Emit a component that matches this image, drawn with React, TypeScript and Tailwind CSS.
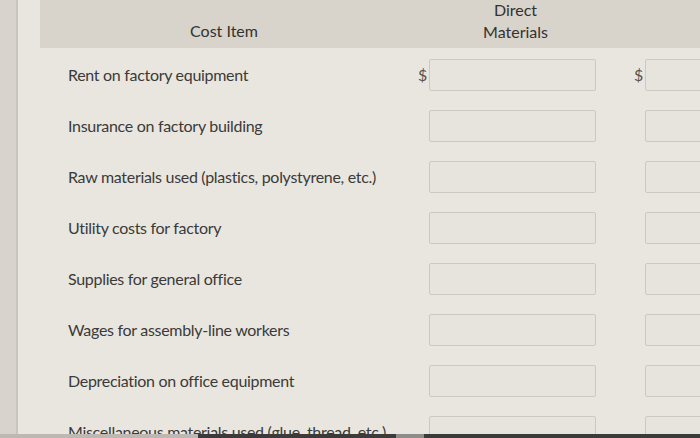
const items = [
  "Rent on factory equipment",
  "Insurance on factory building",
  "Raw materials used (plastics, polystyrene, etc.)",
  "Utility costs for factory",
  "Supplies for general office",
  "Wages for assembly-line workers",
  "Depreciation on office equipment",
  "Miscellaneous materials used (glue, thread, etc.)",
];

function Row({ label, first }: { label: string; first: boolean }) {
  return (
    <div className="flex h-[51px] items-center">
      <div className="w-[378px] pl-[28px] text-[16px] tracking-[-0.3px] text-[#3b3a38]">{label}</div>
      <div className="w-[11px] text-[16px] text-[#555350]">{first ? "$" : ""}</div>
      <div className="h-[32px] w-[167px] rounded-[2px] border border-[#cdc8c0] bg-[#e7e3dd]" />
      <div className="ml-[38px] w-[11px] text-[16px] text-[#555350]">{first ? "$" : ""}</div>
      <div className="h-[32px] w-[80px] rounded-[2px] border border-[#cdc8c0] bg-[#e7e3dd]" />
    </div>
  );
}

export default function App() {
  return (
    <div
      className="relative flex h-[438px] w-[700px] overflow-hidden bg-[#e9e6e0]"
      style={{ fontFamily: "Lato, 'Open Sans', sans-serif" }}
    >
      <div className="w-[18px] shrink-0 border-r-2 border-[#c9c4bc] bg-[#d8d4cd]" />
      <div className="flex flex-1 flex-col pl-[22px]">
        <div className="flex h-[48px] shrink-0 items-end bg-[#d8d3cb] pb-[5px]">
          <div className="w-[368px] text-center text-[16px] text-[#33322f]">Cost Item</div>
          <div className="ml-[12px] w-[191px] text-center text-[16px] leading-[22px] text-[#33322f]">
            Direct
            <br />
            Materials
          </div>
        </div>
        <div className="mt-[1px] flex flex-col">
          {items.map((label, i) => (
            <Row key={label} label={label} first={i === 0} />
          ))}
        </div>
      </div>
      <div className="absolute bottom-0 left-0 flex h-[4px] w-full">
        <div className="w-[198px] bg-[#bdb8b1]" />
        <div className="w-[198px] bg-[#3b3b3b]" />
        <div className="w-[28px] bg-[#8f8d8a]" />
        <div className="flex-1 bg-[#3b3b3b]" />
      </div>
    </div>
  );
}
